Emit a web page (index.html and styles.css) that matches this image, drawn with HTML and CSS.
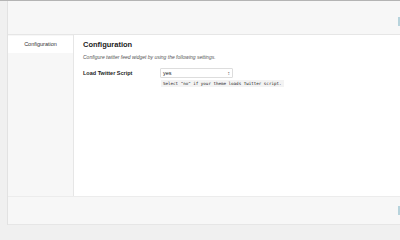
FILE: index.html
```html
<!DOCTYPE html>
<html>
<head>
<meta charset="utf-8">
<link rel="stylesheet" href="styles.css">
</head>
<body>
<div class="frame">
  <div class="panel">
    <div class="header"><span class="btn"></span></div>
    <div class="content">
      <div class="tabs">
        <div class="tab active">Configuration</div>
      </div>
      <div class="main">
        <h2 class="title">Configuration</h2>
        <p class="desc">Configure twitter feed widget by using the following settings.</p>
        <div class="row">
          <div class="label">Load Twitter Script</div>
          <div class="field">
            <div class="select"><span>yes</span><span class="arrows">&#x2195;</span></div>
            <div class="help">Select "no" if your theme loads Twitter script.</div>
          </div>
        </div>
      </div>
    </div>
    <div class="footer"><span class="btn"></span></div>
  </div>
</div>
</body>
</html>
```
FILE: styles.css
```css
html, body { margin: 0; padding: 0; }
body {
  background: #f0f0f0;
  font-family: "Helvetica Neue", "Liberation Sans", Arial, sans-serif;
  width: 400px;
  height: 240px;
  overflow: hidden;
}
.frame {
  border-top: 1px solid #b4b4b4;
  padding-left: 7px;
  height: 239px;
  box-sizing: border-box;
}
.panel {
  border-left: 1px solid #e2e2e2;
  background: #f7f7f7;
}
.header {
  height: 33px;
  border-bottom: 1px solid #e6e6e6;
  position: relative;
}
.btn {
  position: absolute;
  right: 0;
  top: 16px;
  width: 2px;
  height: 9px;
  background: #b7d3dc;
}
.content {
  display: flex;
  height: 161px;
  background: #fff;
  border-bottom: 1px solid #ececec;
}
.tabs {
  width: 65px;
  background: #f7f7f7;
  border-right: 1px solid #e6e6e6;
  padding-top: 1px;
}
.tab {
  height: 17px;
  line-height: 16px;
  font-size: 5.5px;
  text-align: center;
  color: #333;
}
.tab.active { background: #fff; }
.main {
  flex: 1;
  padding: 5px 0 0 9px;
  color: #222;
}
.title {
  margin: 0;
  font-size: 7.5px;
  font-weight: bold;
  line-height: 10px;
}
.desc {
  margin: 3px 0 0;
  font-size: 5px;
  font-style: italic;
  color: #555;
  line-height: 8px;
}
.row {
  display: flex;
  margin-top: 7px;
}
.label {
  width: 77px;
  font-size: 5.5px;
  font-weight: bold;
  line-height: 8px;
  padding-top: 1px;
}
.field { display: flex; flex-direction: column; }
.select {
  width: 67px;
  height: 8px;
  border: 1px solid #ddd;
  border-radius: 1px;
  background: #fff;
  font-size: 5.5px;
  line-height: 8px;
  padding: 0 2px;
  display: flex;
  justify-content: space-between;
}
.arrows { font-size: 5px; color: #555; }
.help {
  margin-top: 2px;
  margin-left: 1px;
  font-family: "DejaVu Sans Mono", "Liberation Mono", monospace;
  font-size: 4.2px;
  line-height: 7px;
  background: #f3f3f3;
  padding: 0 2px;
  color: #222;
  align-self: flex-start;
}
.footer {
  height: 27px;
  border-bottom: 1px solid #e6e6e6;
  position: relative;
}
.footer .btn { top: 9px; }
```
